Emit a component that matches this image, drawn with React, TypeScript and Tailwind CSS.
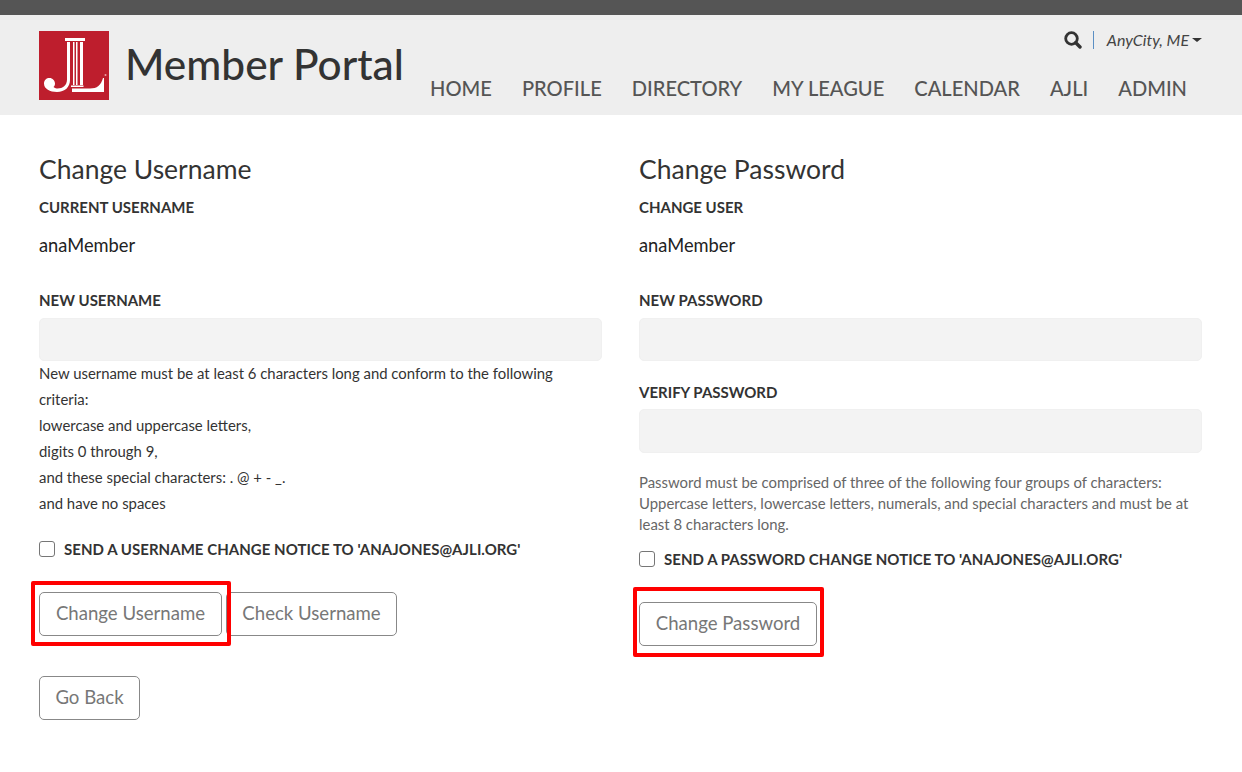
import React from "react";

function Logo() {
  return (
    <svg width="70" height="69" viewBox="0 0 70 69" className="block shrink-0">
      <rect width="70" height="69" fill="#be1e2d" />
      <g fill="#fff">
        <rect x="26" y="7" width="20" height="3" />
        <rect x="34" y="11" width="1.500" height="43" />
        <rect x="37" y="11" width="1.500" height="43" />
        <rect x="41" y="11" width="3" height="43" />
        <rect x="32" y="54.500" width="12.500" height="1.500" />
        <path d="M28 11h3v38c0 7-5 12-13 12-7 0-13-3-13-8.500 0-3.500 2.500-5.500 5.500-5.500s5.500 2.500 5.500 5.500c0 1.500-.5 2.500-1.500 3.500 1.500 1 3 1.500 4 1.500 5 0 9.500-3 9.500-9z" />
        <path d="M33 57.500h18c7 0 11-3 13-10.500h1v14H33z" />
        <circle cx="66.500" cy="44" r="1" fill="#e8a0a8" />
      </g>
    </svg>
  );
}

function Label({ children }: { children: React.ReactNode }) {
  return <div className="text-[15px] leading-5 font-bold text-[#333]">{children}</div>;
}

function Field({ h = "h-[43px]" }: { h?: string }) {
  return <input className={`block w-full ${h} rounded-[5px] bg-[#f3f3f3] border border-[#f0f0f0]`} />;
}

function Btn({ children, w, box }: { children: React.ReactNode; w: string; box?: string }) {
  return (
    <div className="relative">
      <button className={`${w} h-[44px] pb-[2px] rounded-[5px] border border-[#888] bg-white text-[18.6px] leading-[38px] text-[#777] text-center`}>
        {children}
      </button>
      {box ? <div className={`absolute z-10 ${box} border-[4px] border-[#f00] rounded-[2px] pointer-events-none`} /> : null}
    </div>
  );
}

function Check({ children }: { children: React.ReactNode }) {
  return (
    <div className="flex items-center">
      <span className="w-[16px] h-[16px] rounded-[3px] border border-[#767676] bg-white shrink-0" />
      <span className="ml-[9px] text-[15px] font-bold tracking-[0.04px] text-[#333] whitespace-nowrap">{children}</span>
    </div>
  );
}

export default function App() {
  return (
    <div className="min-h-[772px] bg-white font-['Lato','Noto_Sans',sans-serif] text-[#333]">
      <div className="h-[15px] bg-[#555]" />
      <header className="h-[100px] bg-[#eee] px-[39px] pt-[16px] flex">
        <Logo />
        <div className="ml-[16px] mt-[7px] text-[42.4px] leading-[52px] font-medium text-[#333] whitespace-nowrap">Member Portal</div>
        <div className="flex-1 relative">
          <div className="flex justify-end items-center h-[20px] mt-[-1px] pr-[1px]">
            <svg width="18" height="18" viewBox="0 0 18 18" fill="none" stroke="#333" className="block">
              <circle cx="7.500" cy="7.500" r="5.800" strokeWidth="2.800" />
              <path d="M11.800 11.800L16 16" strokeWidth="3.400" strokeLinecap="round" />
            </svg>
            <span className="w-px h-[18px] bg-[#5b8fc4] ml-[11px] mr-[13px]" />
            <span className="italic text-[16px] text-[#444]">AnyCity, ME</span>
            <span className="ml-[3px] w-0 h-0 border-x-[5px] border-x-transparent border-t-[4.500px] border-t-[#333]" />
          </div>
          <nav className="flex justify-end gap-[30px] pr-[16px] mt-[24px] text-[20.1px] leading-[28px] font-medium text-[#555] whitespace-nowrap">
            <span>HOME</span>
            <span>PROFILE</span>
            <span>DIRECTORY</span>
            <span>MY LEAGUE</span>
            <span>CALENDAR</span>
            <span>AJLI</span>
            <span>ADMIN</span>
          </nav>
        </div>
      </header>

      <main className="px-[39px] grid grid-cols-[563px_563px] gap-x-[37px] pt-[38px]">
        <section>
          <h2 className="text-[26.5px] leading-[32px] text-[#333]">Change Username</h2>
          <div className="mt-[12px]"><Label>CURRENT USERNAME</Label></div>
          <div className="mt-[17px] text-[18.3px] leading-[22px] text-[#222]">anaMember</div>
          <div className="mt-[34px]"><Label>NEW USERNAME</Label></div>
          <div className="mt-[8px]"><Field /></div>
          <div className="mt-[-1px] text-[14.9px] leading-[26px] text-[#333]">
            <p className="w-[530px]">New username must be at least 6 characters long and conform to the following criteria:</p>
            <p>lowercase and uppercase letters,</p>
            <p>digits 0 through 9,</p>
            <p>and these special characters: . @ + - _.</p>
            <p>and have no spaces</p>
          </div>
          <div className="mt-[22px]"><Check>SEND A USERNAME CHANGE NOTICE TO 'ANAJONES@AJLI.ORG'</Check></div>
          <div className="mt-[31px] flex gap-[4px]">
            <Btn w="w-[183px]" box="left-[-8px] top-[-11px] right-[-9px] bottom-[-10px]">Change Username</Btn>
            <Btn w="w-[171px]">Check Username</Btn>
          </div>
          <div className="mt-[40px] pb-[52px]"><Btn w="w-[101px]">Go Back</Btn></div>
        </section>

        <section>
          <h2 className="text-[26.5px] leading-[32px] text-[#333]">Change Password</h2>
          <div className="mt-[12px]"><Label>CHANGE USER</Label></div>
          <div className="mt-[17px] text-[18.3px] leading-[22px] text-[#222]">anaMember</div>
          <div className="mt-[34px]"><Label>NEW PASSWORD</Label></div>
          <div className="mt-[8px]"><Field /></div>
          <div className="mt-[21px]"><Label>VERIFY PASSWORD</Label></div>
          <div className="mt-[7px]"><Field h="h-[44px]" /></div>
          <p className="mt-[19px] text-[14.9px] leading-[21px] text-[#666]">
            Password must be comprised of three of the following four groups of characters: Uppercase letters, lowercase letters, numerals, and special characters and must be at least 8 characters long.
          </p>
          <div className="mt-[13px]"><Check>SEND A PASSWORD CHANGE NOTICE TO 'ANAJONES@AJLI.ORG'</Check></div>
          <div className="mt-[31px] flex">
            <Btn w="w-[178px]" box="left-[-6px] top-[-15px] right-[-7px] bottom-[-11px]">Change Password</Btn>
          </div>
        </section>
      </main>
    </div>
  );
}
